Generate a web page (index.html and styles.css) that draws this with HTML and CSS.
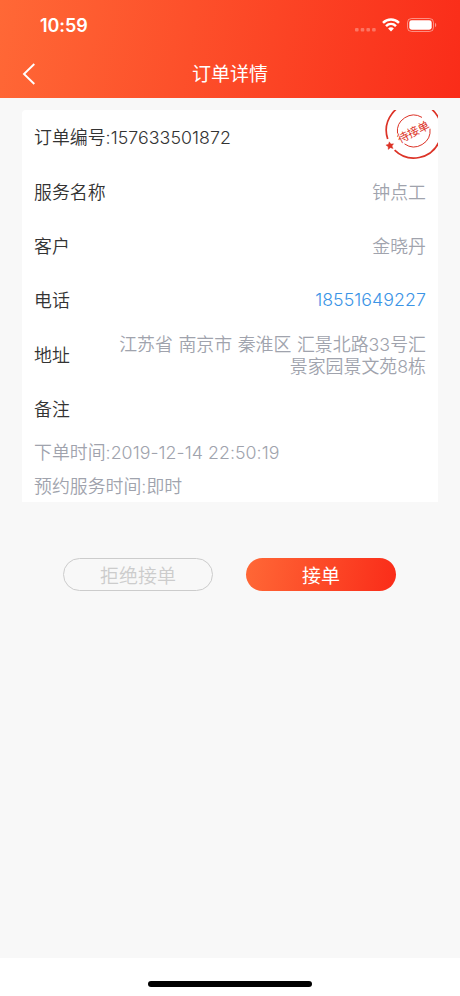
FILE: index.html
```
<!DOCTYPE html>
<html lang="zh-CN">
<head>
    <meta charset="UTF-8">
    <meta name="viewport" content="width=device-width, initial-scale=1.0">
    <title>订单详情</title>
    <link rel="stylesheet" href="styles.css">
</head>
<body>
    <div class="page">
        <header class="header">
            <div class="status-bar">
                <span class="time">10:59</span>
                <div class="status-icons">
                    <svg class="signal" width="21" height="4" viewBox="0 0 21 4">
                        <rect x="0" y="0" width="3.6" height="3.6" rx="1"/>
                        <rect x="5.7" y="0" width="3.6" height="3.6" rx="1"/>
                        <rect x="11.4" y="0" width="3.6" height="3.6" rx="1"/>
                        <rect x="17.1" y="0" width="3.6" height="3.6" rx="1"/>
                    </svg>
                    <svg class="wifi" width="18" height="14" viewBox="0 0 18 14">
                        <g fill="none" stroke="#fff" stroke-width="2.5">
                            <path d="M1 4.9C5.5.5 12.5.5 17 4.9"/>
                            <path d="M4 8.1C6.9 5.3 11.1 5.3 14 8.1"/>
                        </g>
                        <path fill="#fff" d="M6.1 10.4C7.7 8.9 10.3 8.9 11.9 10.4L9 13.5Z"/>
                    </svg>
                    <svg class="battery" width="30" height="14" viewBox="0 0 30 14">
                        <rect x=".5" y=".5" width="26" height="13" rx="4" fill="none" stroke="#fff" stroke-opacity=".45"/>
                        <rect x="2.3" y="2.3" width="22.4" height="9.4" rx="2.4" fill="#fff"/>
                        <path d="M28 4.8C29.7 5.5 29.7 8.5 28 9.2Z" fill="#fff" fill-opacity=".5"/>
                    </svg>
                </div>
            </div>
            <div class="nav-bar">
                <svg class="back" width="14" height="22" viewBox="0 0 14 22">
                    <path d="M12.3 1L2 11L12.3 21" fill="none" stroke="#fff" stroke-width="1.9"/>
                </svg>
                <h1>订单详情</h1>
            </div>
        </header>

        <main class="content">
            <section class="card">
                <div class="row">
                    <span class="label">订单编号<span class="num">:157633501872</span></span>
                </div>
                <div class="row">
                    <span class="label">服务名称</span>
                    <span class="value">钟点工</span>
                </div>
                <div class="row">
                    <span class="label">客户</span>
                    <span class="value">金晓丹</span>
                </div>
                <div class="row">
                    <span class="label">电话</span>
                    <span class="value phone num">18551649227</span>
                </div>
                <div class="row">
                    <span class="label">地址</span>
                    <span class="value address">江苏省 南京市 秦淮区 汇景北路<span class="num">33</span>号汇<br>景家园景文苑<span class="num">8</span>栋</span>
                </div>
                <div class="row">
                    <span class="label">备注</span>
                </div>
                <p class="meta">下单时间<span class="num">:2019-12-14 22:50:19</span></p>
                <p class="meta">预约服务时间<span class="num">:</span>即时</p>

                <!-- order state stamp, cut off by the card corner -->
                <svg class="stamp" width="54" height="52" viewBox="0 0 54 52">
                    <g fill="none" stroke="#dc3327">
                        <path d="M3.7 29A27.6 27.6 0 1 1 10.6 40.1" stroke-width="1.7"/>
                        <path d="M13.5 23.5A16.3 16.3 0 0 1 38 7.4" stroke-width="1"/>
                        <path d="M46 18.7A16.3 16.3 0 0 1 20.5 33.9" stroke-width="1"/>
                    </g>
                    <path class="stamp-star" d="M5.2 31.8L6.9 34.1L9.6 33.8L8 36L9.1 38.6L6.4 37.7L4.2 39.5L4.2 36.7L1.9 35.1L4.5 34.3Z"/>
                    <text x="29.4" y="26.2" transform="rotate(-27 29.4 22.1)">待接单</text>
                </svg>
            </section>

            <div class="actions">
                <button class="btn btn-reject" type="button">拒绝接单</button>
                <button class="btn btn-accept" type="button">接单</button>
            </div>
        </main>

        <footer class="home-bar">
            <div class="home-indicator"></div>
        </footer>
    </div>
</body>
</html>
```

FILE: styles.css
```
* {
    box-sizing: border-box;
}
body {
    margin: 0;
    font-family: "Noto Sans CJK SC", sans-serif;
    font-weight: 350;
    font-size: 17.9px;
    color: #333;
    background-color: #f8f8f8;
}
.page {
    display: flex;
    flex-direction: column;
    height: 996px;
}
.header {
    height: 98px;
    background: linear-gradient(100deg, #ff6836 0%, #fa2c19 100%);
    color: #fff;
}
.status-bar {
    display: flex;
    justify-content: space-between;
    align-items: center;
    height: 50px;
    padding: 0 23.5px 0 40px;
}
.time {
    font-family: Inter, sans-serif;
    font-size: 18px;
    font-weight: 600;
    letter-spacing: -0.1px;
}
.status-icons {
    display: flex;
    align-items: center;
    gap: 6.5px;
}
.signal {
    margin-top: 10px;
    fill: #fff;
    fill-opacity: 0.3;
}
.nav-bar {
    display: grid;
    grid-template-columns: 60px 1fr 60px;
    align-items: center;
    height: 48px;
}
.back {
    margin-left: 22px;
}
.nav-bar h1 {
    margin: 0;
    font-size: 19px;
    font-weight: 400;
    line-height: 46px;
    height: 48px;
    text-align: center;
}
.content {
    flex: 1;
    padding: 12px 22px 0;
}
.card {
    position: relative;
    height: 392px;
    padding: 0 12px;
    background-color: #fff;
    border-radius: 4px 4px 0 0;
    overflow: hidden;
}
.row {
    display: flex;
    justify-content: space-between;
    align-items: center;
    height: 54.4px;
    padding-bottom: 2px;
    line-height: 22px;
}
.num {
    font-family: Inter, sans-serif;
    font-weight: 350;
    font-size: 17.8px;
    line-height: 1;
    letter-spacing: 0.05px;
}
.value {
    color: #a0a3ad;
    text-align: right;
}
.address {
    word-spacing: 1.6px;
}
.phone {
    padding-top: 2px;
    color: #3b94e6;
}
.meta {
    margin: 0;
    height: 33.3px;
    line-height: 31px;
    color: #a0a3ad;
}
.stamp {
    position: absolute;
    top: 0;
    right: 0;
}
.stamp text {
    font-size: 11.5px;
    font-weight: 400;
    text-anchor: middle;
    fill: #dc3327;
}
.stamp-star {
    fill: #dc3327;
    stroke: #dc3327;
    stroke-width: 0.4;
}
.actions {
    display: flex;
    justify-content: center;
    gap: 33px;
    margin-top: 56px;
    padding-right: 1px;
}
.btn {
    width: 150px;
    height: 33px;
    padding: 0;
    border: none;
    border-radius: 17px;
    font-family: inherit;
    font-size: 19px;
    font-weight: 350;
    line-height: 33px;
}
.btn-reject {
    border: 1px solid #ccc;
    background-color: transparent;
    color: #ccc;
    line-height: 31px;
}
.btn-accept {
    background: linear-gradient(100deg, #ff6836 0%, #fa2c19 100%);
    color: #fff;
    font-weight: 400;
}
.home-bar {
    display: flex;
    justify-content: center;
    height: 38px;
    padding-top: 23px;
    background-color: #fff;
}
.home-indicator {
    width: 164px;
    height: 6px;
    border-radius: 3px;
    background-color: #000;
}
```
